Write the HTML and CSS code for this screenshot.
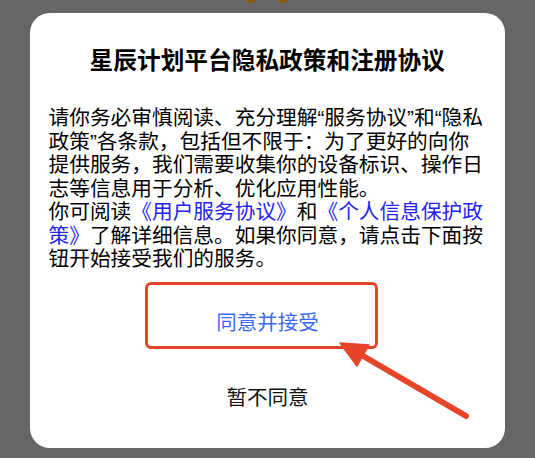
FILE: index.html
```html
<!DOCTYPE html>
<html lang="zh-CN">
<head>
<meta charset="utf-8">
<title>星辰计划平台隐私政策和注册协议</title>
<link rel="stylesheet" href="styles.css">
</head>
<body>
<div class="screen">
  <div class="dialog">
    <h1 class="title">星辰计划平台隐私政策和注册协议</h1>
    <p class="body-text">请你务必审慎阅读、充分理解“服务协议”和“隐私政策”各条款，包括但不限于：为了更好的向你提供服务，我们需要收集你的设备标识、操作日志等信息用于分析、优化应用性能。<br>你可阅读<a class="link">《用户服务协议》</a>和<a class="link">《个人信息保护政策》</a>了解详细信息。如果你同意，请点击下面按钮开始接受我们的服务。</p>
    <div class="actions">
      <div class="btn btn-agree">同意并接受</div>
      <div class="btn btn-refuse">暂不同意</div>
    </div>
    <div class="highlight"></div>
  </div>
  <svg class="overlay" width="535" height="458" viewBox="0 0 535 458">
    <ellipse cx="251" cy="-1" rx="6" ry="4" fill="#8a5a12"/>
    <ellipse cx="283" cy="-1" rx="6" ry="4" fill="#8a5a12"/>
    <line x1="466" y1="416" x2="358" y2="353" stroke="#e8442a" stroke-width="6" stroke-linecap="round"/>
    <polygon points="340,343 357,366 369,345" fill="#e8442a" stroke="#e8442a" stroke-width="1.5" stroke-linejoin="round"/>
  </svg>
</div>
</body>
</html>
```
FILE: styles.css
```css
html, body {
  margin: 0;
  padding: 0;
}
body {
  background: #666666;
  width: 535px;
  height: 458px;
  overflow: hidden;
}
.screen {
  position: relative;
  width: 535px;
  height: 458px;
  padding-top: 13px;
  box-sizing: border-box;
}
.dialog {
  position: relative;
  margin-left: 30px;
  width: 475px;
  height: 435px;
  background: #ffffff;
  border-radius: 20px;
  box-sizing: border-box;
  padding: 31px 19px 0 18.5px;
  font-family: "Liberation Sans", "Noto Sans CJK SC", sans-serif;
  color: #000;
}
.title {
  margin: 0;
  font-family: "Noto Sans CJK SC", sans-serif;
  font-size: 23.7px;
  font-weight: 700;
  line-height: 30px;
  text-align: center;
  color: #000;
}
.body-text {
  margin: 32px 0 0 0;
  font-size: 20.7px;
  line-height: 23.5px;
}
.link {
  color: #2424f0;
}
.actions {
  display: flex;
  flex-direction: column;
  margin-top: 25px;
  margin-left: -18.5px;
  margin-right: -19px;
}
.btn {
  height: 50px;
  line-height: 50px;
  text-align: center;
  font-family: "Noto Sans CJK SC", sans-serif;
  font-size: 20.5px;
}
.btn-agree {
  color: #3d6af5;
}
.btn-refuse {
  margin-top: 25px;
  color: #111;
}
.highlight {
  position: absolute;
  left: 115px;
  top: 269px;
  width: 233px;
  height: 67px;
  box-sizing: border-box;
  border: 3px solid #e8442a;
  border-radius: 6px;
}
.overlay {
  position: absolute;
  left: 0;
  top: 0;
  pointer-events: none;
}
```
